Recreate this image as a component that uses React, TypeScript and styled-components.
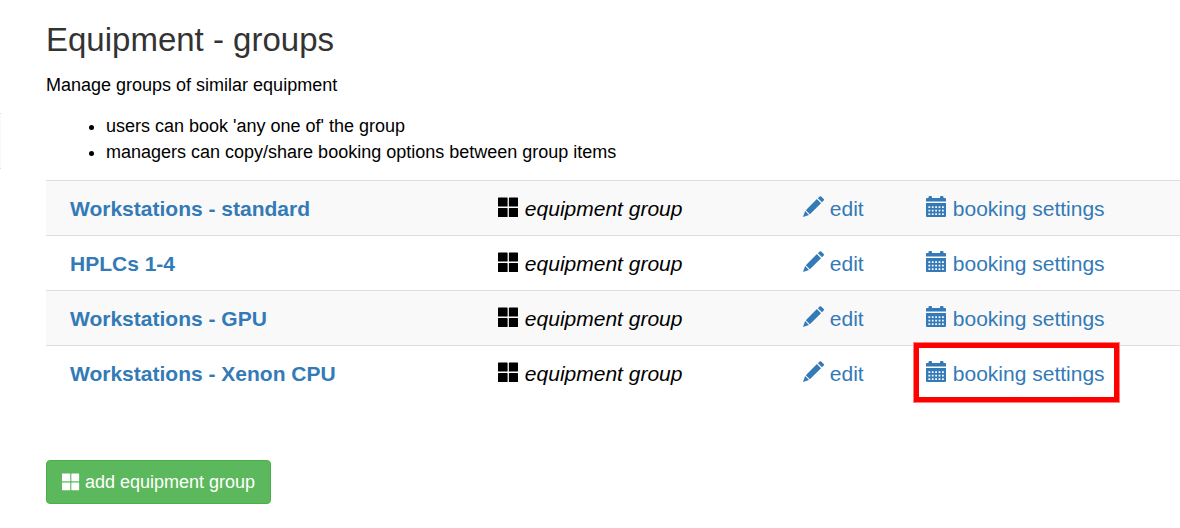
import React from "react";
import styled, { createGlobalStyle } from "styled-components";

const GlobalStyle = createGlobalStyle`
  * { box-sizing: border-box; }
  body {
    margin: 0;
    background: #fff;
    color: #000;
    font: 18px/26px "Liberation Sans", Arial, sans-serif;
  }
`;

const Page = styled.main`
  position: relative;
  padding: 20px 0 24px 46px;
`;

const SideEdge = styled.div`
  position: absolute;
  left: 0;
  top: 113px;
  width: 1px;
  height: 56px;
  background: #f9f9f9;
  border: solid #ddd;
  border-width: 1px 0;
`;

const Title = styled.h1`
  margin: 0 0 12px;
  color: #333;
  font-size: 33px;
  line-height: 40px;
  font-weight: 400;
`;

const Intro = styled.p`
  margin: 0 0 15px;
`;

const Notes = styled.ul`
  margin: 0 0 15px;
  padding-left: 60px;
`;

const GroupTable = styled.table`
  width: 100%;
  table-layout: fixed;
  border-collapse: collapse;
  margin-bottom: 60px;
  font-size: 21px;
  line-height: 30px;
`;

const Row = styled.tr`
  &:nth-child(odd) { background: #f9f9f9; }
`;

const Cell = styled.td<{ $width?: number; $indent?: boolean }>`
  width: ${(p) => (p.$width ? `${p.$width}px` : "auto")};
  padding: 13px 0 11px ${(p) => (p.$indent ? 24 : 12)}px;
  border-top: 1px solid #ddd;
  text-align: left;
  white-space: nowrap;
`;

const Link = styled.a<{ $bold?: boolean }>`
  position: relative;
  color: #337ab7;
  text-decoration: none;
  font-weight: ${(p) => (p.$bold ? 700 : 400)};
`;

const Highlight = styled.span`
  position: absolute;
  inset: -20px -15px -18px -13px;
  border: 6px solid #f00;
  outline: 1px solid rgba(255, 255, 255, 0.5);
  outline-offset: -1px;
  pointer-events: none;
`;

const Glyph = styled.svg<{ $size: number; $drop?: number }>`
  width: ${(p) => p.$size}px;
  height: ${(p) => p.$size}px;
  fill: currentColor;
  vertical-align: -${(p) => p.$drop ?? 1}px;
`;

const AddButton = styled.button`
  display: block;
  padding: 8px 15px;
  border: 1px solid #4cae4c;
  border-radius: 4px;
  background: #5cb85c;
  color: #fff;
  font: inherit;
  cursor: pointer;
`;

const TilesIcon = ({ size = 21, drop = 2 }: { size?: number; drop?: number }) => (
  <Glyph $size={size} $drop={drop} viewBox="0 0 21 21" aria-hidden="true">
    <path d="M.6 .5H9q.6 0 .6.6v7.800q0 .6-.6.6H.6q-.6 0-.6-.6V1.100Q0 .5 .6 .5zM11.500 .5h7.900q.6 0 .6.6v7.800q0 .6-.6.6h-7.900q-.6 0-.6-.6V1.100q0-.6.6-.6zM.6 11H9q.6 0 .6.6v7.800q0 .6-.6.6H.6q-.6 0-.6-.6v-7.800Q0 11 .6 11zM11.500 11h7.900q.6 0 .6.6v7.800q0 .6-.6.6h-7.900q-.6 0-.6-.6v-7.800q0-.6.6-.6z" />
  </Glyph>
);

const PencilIcon = () => (
  <Glyph $size={21} viewBox="0 0 21 21" aria-hidden="true">
    <path d="M16.600 .5q.8-.7 1.600 0l2.500 2.500q.7.8 0 1.600l-1.700 1.700-4.100-4.100zM13.900 3.100l4.100 4.100L6.900 18.300 2.800 14.200zM2.100 15.100l3.900 3.900L0 21z" />
  </Glyph>
);

const dayColumns = [2.4, 5.8, 9.2, 12.6, 16];
const dayRows = [10.2, 13.7, 17.2];
const dayHoles = dayRows
  .map((y) => dayColumns.map((x) => `M${x} ${y}v1.800h1.800v-1.800z`).join(""))
  .join("");

const CalendarIcon = () => (
  <Glyph $size={21} viewBox="0 0 21 21" aria-hidden="true">
    <path
      fillRule="evenodd"
      d={`M0 5.500V3q0-1 1-1h1.500V1q0-1 1-1h1.500q1 0 1 1v1h8V1q0-1 1-1h1.500q1 0 1 1v1H19q1 0 1 1v2.500zM0 7h20v13q0 1-1 1H1q-1 0-1-1z${dayHoles}`}
    />
  </Glyph>
);

const groups = [
  { name: "Workstations - standard" },
  { name: "HPLCs 1-4" },
  { name: "Workstations - GPU" },
  { name: "Workstations - Xenon CPU", highlighted: true },
];

export default function App() {
  return (
    <Page>
      <GlobalStyle />
      <SideEdge />
      <Title>Equipment - groups</Title>
      <Intro>Manage groups of similar equipment</Intro>
      <Notes>
        <li>users can book 'any one of' the group</li>
        <li>managers can copy/share booking options between group items</li>
      </Notes>
      <GroupTable>
        <tbody>
          {groups.map((g) => (
            <Row key={g.name}>
              <Cell as="th" scope="row" $width={440} $indent>
                <Link href="#" $bold>{g.name}</Link>
              </Cell>
              <Cell $width={305}>
                <TilesIcon /> <em>equipment group</em>
              </Cell>
              <Cell $width={123}>
                <Link href="#"><PencilIcon /> edit</Link>
              </Cell>
              <Cell>
                <Link href="#">
                  <CalendarIcon /> booking settings
                  {g.highlighted && <Highlight />}
                </Link>
              </Cell>
            </Row>
          ))}
        </tbody>
      </GroupTable>
      <AddButton type="button">
        <TilesIcon size={18} drop={3} /> add equipment group
      </AddButton>
    </Page>
  );
}
